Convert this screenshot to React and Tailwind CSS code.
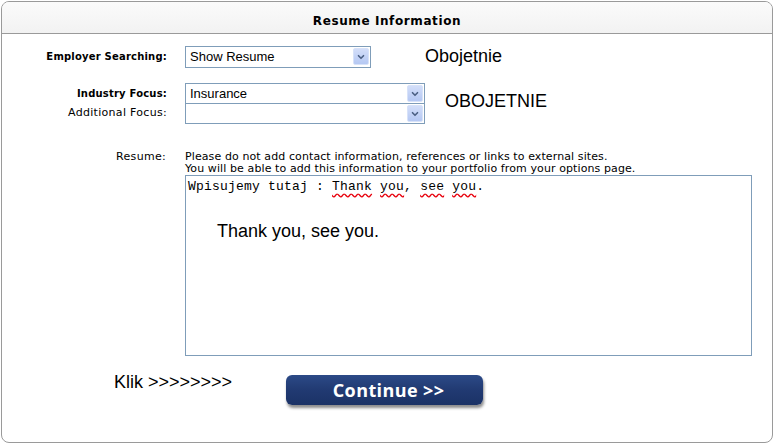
import { ChevronDown } from "lucide-react";

const Arrow = () => (
  <div className="w-[16px] h-[17px] mr-[1px] flex items-center justify-center rounded-[2px] border border-[#d7e2f9] bg-gradient-to-b from-[#d3def9] to-[#b5c8f3]">
    <ChevronDown className="w-[10px] h-[10px] text-[#4d6185]" strokeWidth={4} />
  </div>
);

const FakeSelect = ({ value, width, className = "" }) => (
  <div
    className={`h-[21px] flex items-center justify-between border border-[#7f9db9] bg-white pl-[4px] ${className}`}
    style={{ width }}
  >
    <span className="text-[13px] text-black font-['Liberation_Sans',Arial,sans-serif] leading-none">{value}</span>
    <Arrow />
  </div>
);

const Label = ({ children, bold }) => (
  <div
    className={`w-[165px] text-right text-black font-['DejaVu_Sans',Verdana,sans-serif] ${bold ? "font-bold text-[10px] tracking-[0.2px]" : "text-[11px] tracking-[0.3px]"}`}
  >
    {children}
  </div>
);

export default function App() {
  const sans = "font-['Liberation_Sans',Arial,sans-serif]";
  return (
    <div className="w-[774px] h-[444px] bg-white pt-[1px] pl-[1px] overflow-hidden">
      <div className="w-[772px] h-[442px] border border-[#9a9a9a] rounded-[8px] overflow-hidden bg-white">
        {/* header */}
        <div className="h-[32px] border-b border-[#9a9a9a] bg-gradient-to-b from-[#fbfbfb] to-[#f2f2f2] flex items-center justify-center pt-[7px]">
          <span className="text-[12px] font-bold text-black font-['DejaVu_Sans',Verdana,sans-serif] tracking-[0.6px]">
            Resume Information
          </span>
        </div>

        {/* employer searching */}
        <div className="mt-[9px] flex items-center">
          <Label bold>Employer Searching:</Label>
          <FakeSelect value="Show Resume" width={186} className="ml-[18px] h-[22px]" />
          <span className={`ml-[54px] text-[18px] text-black ${sans}`}>Obojetnie</span>
        </div>

        {/* industry focus */}
        <div className="mt-[13px] flex items-center">
          <div className="flex flex-col">
            <div className="h-[20px] flex items-center">
              <Label bold>Industry Focus:</Label>
            </div>
            <div className="h-[20px] flex items-center">
              <Label>Additional Focus:</Label>
            </div>
          </div>
          <div className="ml-[18px] flex flex-col">
            <FakeSelect value="Insurance" width={240} />
            <FakeSelect value="" width={240} className="-mt-[1px]" />
          </div>
          <span className={`ml-[20px] -mt-[4px] text-[18px] text-black ${sans}`}>OBOJETNIE</span>
        </div>

        {/* resume */}
        <div className="mt-[27px] flex">
          <div className="w-[164px] text-right text-[11px] tracking-[0.3px] text-black font-['DejaVu_Sans',Verdana,sans-serif] leading-[12px]">
            Resume:
          </div>
          <div className="ml-[19px]">
            <div className="text-[11px] text-black font-['DejaVu_Sans',Verdana,sans-serif] leading-[12px] tracking-[0.1px]">
              <div>Please do not add contact information, references or links to external sites.</div>
              <div>You will be able to add this information to your portfolio from your options page.</div>
            </div>
            <div className="w-[567px] h-[181px] border border-[#7f9db9] bg-white px-[2px] pt-[3px]">
              <div className="text-[13px] text-black font-['Liberation_Mono','Courier_New',monospace] leading-[16px] tracking-[0.2px]">
                Wpisujemy tutaj :{" "}
                <span className="underline decoration-wavy decoration-red-600 underline-offset-[3px]">Thank</span>{" "}
                <span className="underline decoration-wavy decoration-red-600 underline-offset-[3px]">you</span>,{" "}
                <span className="underline decoration-wavy decoration-red-600 underline-offset-[3px]">see</span>{" "}
                <span className="underline decoration-wavy decoration-red-600 underline-offset-[3px]">you</span>.
              </div>
              <div className={`mt-[23px] ml-[29px] text-[18px] text-black ${sans}`}>Thank you, see you.</div>
            </div>
          </div>
        </div>

        {/* continue */}
        <div className="mt-[19px] flex items-start">
          <span className={`ml-[112px] -mt-[6px] text-[18px] text-black ${sans}`}>Klik &gt;&gt;&gt;&gt;&gt;&gt;&gt;&gt;</span>
          <button className="ml-[54px] w-[197px] h-[30px] rounded-[6px] bg-gradient-to-b from-[#2c4a87] via-[#213a72] to-[#1b3266] shadow-[1px_3px_3px_rgba(0,0,0,0.45)] flex items-center justify-center pl-[8px]">
            <span className="text-[18px] font-bold text-white font-['Open_Sans',sans-serif] leading-none tracking-[0.4px]">
              Continue &gt;&gt;
            </span>
          </button>
        </div>
      </div>
    </div>
  );
}
